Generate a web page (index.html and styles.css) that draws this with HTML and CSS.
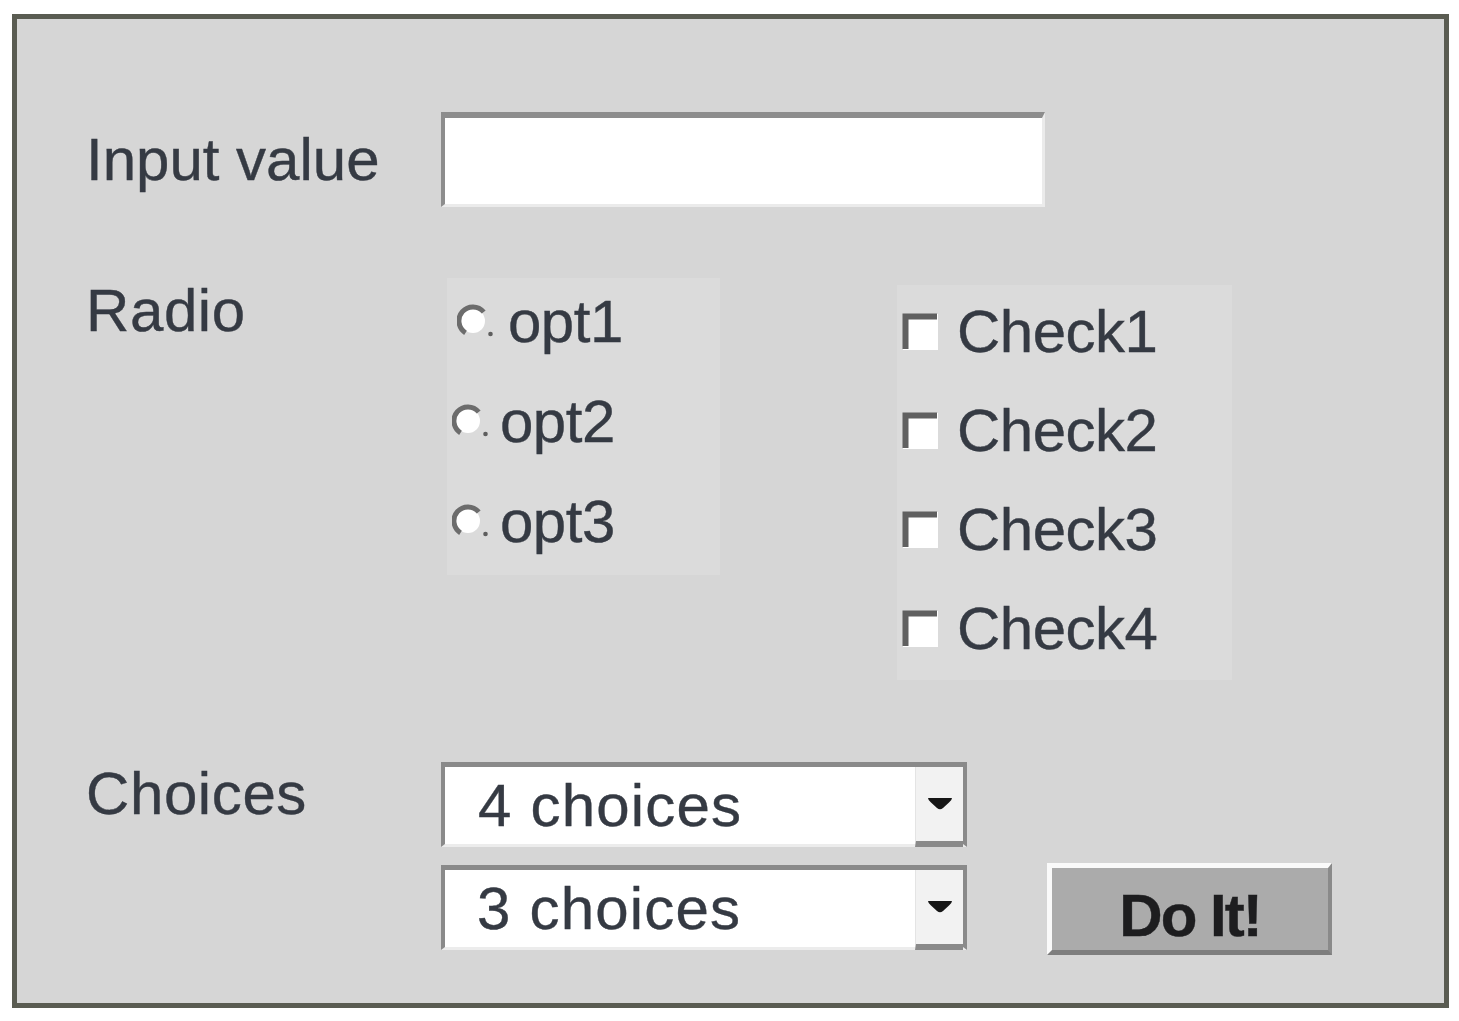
FILE: index.html
```html
<!DOCTYPE html>
<html>
<head>
<meta charset="utf-8">
<link rel="stylesheet" href="styles.css">
</head>
<body>
<div class="frame">
  <div class="row row-input">
    <div class="label label-input">Input value</div>
    <div class="textbox"></div>
  </div>
  <div class="row row-options">
    <div class="label label-radio">Radio</div>
    <div class="radio-panel">
      <div class="option option-first">
        <svg class="radio" width="38" height="38" viewBox="0 0 38 38"><circle cx="16" cy="18" r="12" fill="#ffffff"/><path d="M26.7 9 A14 14 0 1 0 8.5 29.8" fill="none" stroke="#6c6c6c" stroke-width="5"/><circle cx="33.5" cy="31" r="2.3" fill="#5e5e5e"/></svg>
        <span>opt1</span>
      </div>
      <div class="option">
        <svg class="radio" width="38" height="38" viewBox="0 0 38 38"><circle cx="16" cy="18" r="12" fill="#ffffff"/><path d="M26.7 9 A14 14 0 1 0 8.5 29.8" fill="none" stroke="#6c6c6c" stroke-width="5"/><circle cx="33.5" cy="31" r="2.3" fill="#5e5e5e"/></svg>
        <span>opt2</span>
      </div>
      <div class="option">
        <svg class="radio" width="38" height="38" viewBox="0 0 38 38"><circle cx="16" cy="18" r="12" fill="#ffffff"/><path d="M26.7 9 A14 14 0 1 0 8.5 29.8" fill="none" stroke="#6c6c6c" stroke-width="5"/><circle cx="33.5" cy="31" r="2.3" fill="#5e5e5e"/></svg>
        <span>opt3</span>
      </div>
    </div>
    <div class="check-panel">
      <div class="check">
        <svg class="checkbox" width="38" height="38" viewBox="0 0 38 38"><rect x="1" y="1" width="35" height="36" fill="#ffffff"/><path d="M3.5 36 V3.5 H35" fill="none" stroke="#606060" stroke-width="6"/></svg>
        <span>Check1</span>
      </div>
      <div class="check">
        <svg class="checkbox" width="38" height="38" viewBox="0 0 38 38"><rect x="1" y="1" width="35" height="36" fill="#ffffff"/><path d="M3.5 36 V3.5 H35" fill="none" stroke="#606060" stroke-width="6"/></svg>
        <span>Check2</span>
      </div>
      <div class="check">
        <svg class="checkbox" width="38" height="38" viewBox="0 0 38 38"><rect x="1" y="1" width="35" height="36" fill="#ffffff"/><path d="M3.5 36 V3.5 H35" fill="none" stroke="#606060" stroke-width="6"/></svg>
        <span>Check3</span>
      </div>
      <div class="check">
        <svg class="checkbox" width="38" height="38" viewBox="0 0 38 38"><rect x="1" y="1" width="35" height="36" fill="#ffffff"/><path d="M3.5 36 V3.5 H35" fill="none" stroke="#606060" stroke-width="6"/></svg>
        <span>Check4</span>
      </div>
    </div>
  </div>
  <div class="row row-choices">
    <div class="label label-choices">Choices</div>
    <div class="combos">
      <div class="combo">
        <span class="combo-text">4 choices</span>
        <span class="combo-btn"><svg width="26" height="14" viewBox="0 0 26 14"><path d="M1 1 H25 Q25 3 22 5.5 L16 11 Q13 13.5 10 11 L4 5.5 Q1 3 1 1 Z" fill="#161616"/></svg></span>
      </div>
      <div class="combo combo-second">
        <span class="combo-text">3 choices</span>
        <span class="combo-btn"><svg width="26" height="14" viewBox="0 0 26 14"><path d="M1 1 H25 Q25 3 22 5.5 L16 11 Q13 13.5 10 11 L4 5.5 Q1 3 1 1 Z" fill="#161616"/></svg></span>
      </div>
    </div>
    <div class="button">Do It!</div>
  </div>
</div>
</body>
</html>
```

FILE: styles.css
```css
html, body {
  margin: 0;
  padding: 0;
  background: #ffffff;
}

body {
  font-family: "Liberation Sans", Arial, sans-serif;
  color: #353a43;
  -webkit-text-stroke: 0.4px currentColor;
}

.frame {
  margin: 14px 0 0 12px;
  width: 1437px;
  height: 994px;
  box-sizing: border-box;
  border: 5px solid #5a5c52;
  background: #d6d6d6;
  padding: 93px 0 0 69px;
}

.row {
  display: flex;
}

.label {
  width: 355px;
  flex: none;
  font-size: 60px;
  line-height: 60px;
  letter-spacing: 0.6px;
}

.label-input {
  letter-spacing: 0;
}

.row-input {
  align-items: center;
}

.textbox {
  width: 604px;
  height: 95px;
  box-sizing: border-box;
  background: #ffffff;
  border-top: 6px solid #8d8d8d;
  border-left: 4px solid #8d8d8d;
  border-right: 3px solid #ebebeb;
  border-bottom: 3px solid #ebebeb;
}

.row-options {
  margin-top: 71px;
  align-items: flex-start;
}

.label-radio {
  margin-top: 3px;
}

.radio-panel {
  margin-left: 6px;
  width: 273px;
  box-sizing: border-box;
  padding: 14px 0 23px 5px;
  background: #dbdbdb;
  display: flex;
  flex-direction: column;
  gap: 40px;
}

.option {
  display: flex;
  align-items: center;
  gap: 10px;
  height: 60px;
  font-size: 60px;
  line-height: 60px;
  letter-spacing: -0.5px;
}

.option-first {
  padding-left: 5px;
  gap: 13px;
}

.radio {
  flex: none;
  display: block;
}

.check-panel {
  margin-left: 177px;
  margin-top: 7px;
  width: 335px;
  box-sizing: border-box;
  padding: 17px 0 21px 5px;
  background: #dbdbdb;
  display: flex;
  flex-direction: column;
  gap: 39px;
}

.check {
  display: flex;
  align-items: center;
  gap: 17px;
  height: 60px;
  font-size: 60px;
  line-height: 60px;
  letter-spacing: -0.5px;
}

.checkbox {
  flex: none;
  display: block;
}

.row-choices {
  margin-top: 82px;
  align-items: flex-start;
}

.label-choices {
  margin-top: 2px;
}

.combos {
  width: 526px;
  display: flex;
  flex-direction: column;
  gap: 18px;
}

.combo {
  display: flex;
  height: 85px;
  box-sizing: border-box;
  background: #ffffff;
  border-top: 5px solid #8a8a8a;
  border-left: 4px solid #8a8a8a;
  border-right: 4px solid #8a8a8a;
  border-bottom: 3px solid #ececec;
}

.combo-text {
  flex: 1;
  display: flex;
  align-items: center;
  padding-left: 33px;
  font-size: 60px;
  line-height: 60px;
  letter-spacing: 1.2px;
}

.combo-second .combo-text {
  padding-left: 32px;
}

.combo-btn {
  width: 48px;
  flex: none;
  box-sizing: border-box;
  background: #f2f2f2;
  border-left: 1px solid #e4e4e4;
  border-bottom: 6px solid #8a8a8a;
  margin-bottom: -3px;
  display: flex;
  align-items: center;
  justify-content: center;
}

.combo-btn svg {
  display: block;
}

.button {
  margin-left: 80px;
  align-self: flex-end;
  margin-bottom: -5px;
  width: 285px;
  height: 92px;
  box-sizing: border-box;
  background: #ababab;
  border-top: 5px solid #fafafa;
  border-left: 5px solid #fafafa;
  border-right: 4px solid #8a8a8a;
  border-bottom: 5px solid #7e7e7e;
  padding-top: 14px;
  display: flex;
  align-items: center;
  justify-content: center;
  font-size: 60px;
  line-height: 60px;
  font-weight: bold;
  color: #1d1d1f;
  letter-spacing: -2px;
}
```
